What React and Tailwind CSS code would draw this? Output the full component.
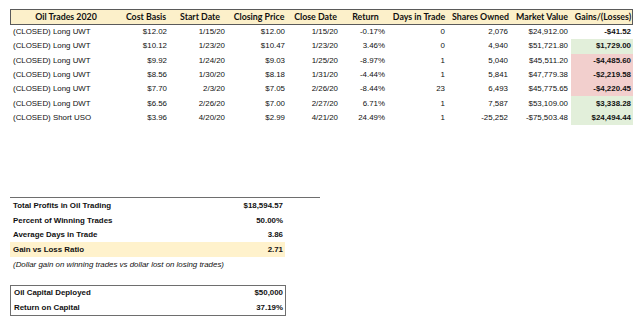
import React from "react";

const cols = "grid grid-cols-[110px_50px_58px_60px_53px_47px_60px_63px_60px_62px]";

const headers = [
  "Oil Trades 2020",
  "Cost Basis",
  "Start Date",
  "Closing Price",
  "Close Date",
  "Return",
  "Days in Trade",
  "Shares Owned",
  "Market Value",
  "Gains/(Losses)",
];

const rows = [
  ["(CLOSED) Long UWT", "$12.02", "1/15/20", "$12.00", "1/15/20", "-0.17%", "0", "2,076", "$24,912.00", "-$41.52", ""],
  ["(CLOSED) Long UWT", "$10.12", "1/23/20", "$10.47", "1/23/20", "3.46%", "0", "4,940", "$51,721.80", "$1,729.00", "g"],
  ["(CLOSED) Long UWT", "$9.92", "1/24/20", "$9.03", "1/25/20", "-8.97%", "1", "5,040", "$45,511.20", "-$4,485.60", "r"],
  ["(CLOSED) Long UWT", "$8.56", "1/30/20", "$8.18", "1/31/20", "-4.44%", "1", "5,841", "$47,779.38", "-$2,219.58", "r"],
  ["(CLOSED) Long UWT", "$7.70", "2/3/20", "$7.05", "2/26/20", "-8.44%", "23", "6,493", "$45,775.65", "-$4,220.45", "r"],
  ["(CLOSED) Long DWT", "$6.56", "2/26/20", "$7.00", "2/27/20", "6.71%", "1", "7,587", "$53,109.00", "$3,338.28", "g"],
  ["(CLOSED) Short USO", "$3.96", "4/20/20", "$2.99", "4/21/20", "24.49%", "1", "-25,252", "-$75,503.48", "$24,494.44", "g"],
];

export default function App() {
  return (
    <div className="w-[640px] h-[321px] bg-white pl-[10px] pt-[9px] font-['Liberation_Sans',Arial,sans-serif] text-[7.9px] text-[#111] overflow-hidden">
      <div className={`${cols} w-[623px] h-[16px] border border-[#5a5a5a] bg-[#fcf0ca] items-center font-['Lato',sans-serif] font-bold text-[8.8px] text-[#111]`}>
        {headers.map((h) => (
          <div key={h} className="text-center whitespace-nowrap leading-none">
            {h}
          </div>
        ))}
      </div>
      {rows.map((r, i) => (
        <div key={i} className={`${cols} w-[623px] h-[14.3px] items-center`}>
          <div className="pl-[3px] whitespace-nowrap leading-none">{r[0]}</div>
          {r.slice(1, 9).map((c, j) => (
            <div key={j} className="text-right pr-[3px] whitespace-nowrap leading-none">
              {c}
            </div>
          ))}
          <div
            className={`h-full flex items-center justify-end pr-[2px] font-bold whitespace-nowrap leading-none ${
              r[10] === "g" ? "bg-[#e2efda]" : r[10] === "r" ? "bg-[#f2cfcd]" : ""
            }`}
          >
            {r[9]}
          </div>
        </div>
      ))}

      <div className="mt-[72px] w-[310px] border-t border-[#6e6e6e] pt-[1px] font-bold">
        <div className="w-[275px]">
          <div className="flex justify-between items-center h-[14.3px] pl-[3px] pr-[2px]">
            <span>Total Profits in Oil Trading</span>
            <span>$18,594.57</span>
          </div>
          <div className="flex justify-between items-center h-[14.3px] pl-[3px] pr-[2px]">
            <span>Percent of Winning Trades</span>
            <span>50.00%</span>
          </div>
          <div className="flex justify-between items-center h-[14.3px] pl-[3px] pr-[2px]">
            <span>Average Days in Trade</span>
            <span>3.86</span>
          </div>
          <div className="flex justify-between items-center h-[15px] pl-[3px] pr-[2px] bg-[#fff2cc]">
            <span>Gain vs Loss Ratio</span>
            <span>2.71</span>
          </div>
        </div>
      </div>
      <div className="h-[15px] flex items-center pl-[3px] italic">
        (Dollar gain on winning trades vs dollar lost on losing trades)
      </div>
      <div className="mt-[13px] w-[276px] border border-[#6e6e6e] font-bold">
        <div className="flex justify-between items-center h-[14.5px] pl-[3px] pr-[2px]">
          <span>Oil Capital Deployed</span>
          <span>$50,000</span>
        </div>
        <div className="flex justify-between items-center h-[14.5px] pl-[3px] pr-[2px]">
          <span>Return on Capital</span>
          <span>37.19%</span>
        </div>
      </div>
    </div>
  );
}
